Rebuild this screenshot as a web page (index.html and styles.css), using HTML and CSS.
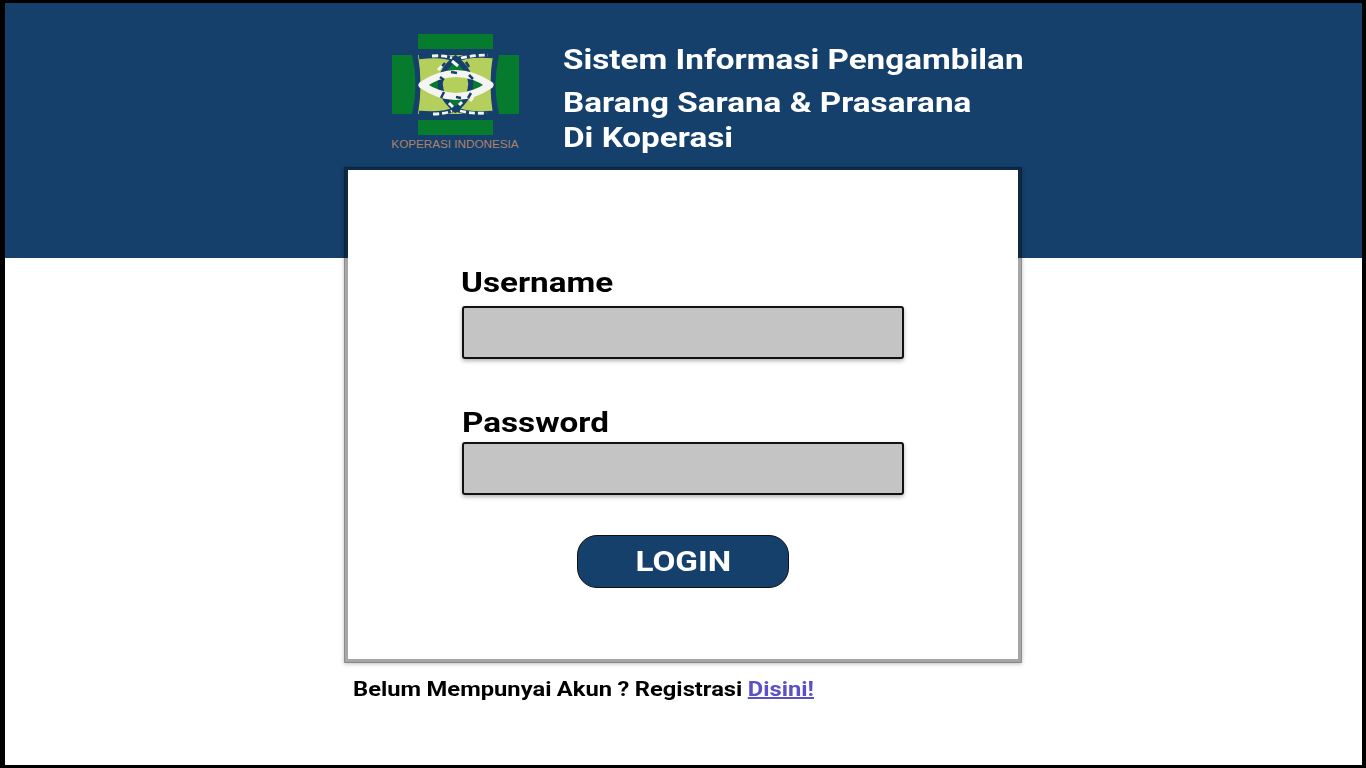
FILE: index.html
```html
<!DOCTYPE html>
<html lang="id">
<head>
<meta charset="utf-8">
<title>Sistem Informasi Pengambilan Barang</title>
<link rel="stylesheet" href="styles.css">
</head>
<body>
<div class="frame">
  <header class="hero">
    <div class="brand">
      <div class="logo">
        <svg class="mark" viewBox="390 33 130 103" aria-hidden="true">
          <rect x="418" y="34" width="75" height="15" fill="#067a2d"/>
          <rect x="418" y="120" width="75" height="15" fill="#067a2d"/>
          <path d="M392 55H412Q419 85 412 114H392Z" fill="#067a2d"/>
          <path d="M519 55H499Q492 85 499 114H519Z" fill="#067a2d"/>
          <path d="M418 55H493Q488 85 493 114H418Q423 85 418 55Z" fill="#b5cf5d"/>
          <path d="M421 85Q456 64 491 85Q456 106 421 85Z" fill="#067a2d"/>
          <path d="M455.500 58Q425 84 455.500 110Q486 84 455.500 58Z" fill="#067a2d"/>
          <rect x="440" y="74" width="31" height="23" rx="7" fill="#b5cf5d"/>
          <path d="M455.500 58Q425 84 455.500 110Q486 84 455.500 58Z" fill="none" stroke="#15406b" stroke-width="5"/>
          <path d="M419 57Q444 54 455.500 60Q468 54 493 56M419 113Q444 115 455.500 109Q468 115 493 113" fill="none" stroke="#15406b" stroke-width="4.500"/>
          <path d="M432 56Q444 55 452 58M461 58Q474 55 488 55M433 114Q444 114 452 111M460 111Q474 114 487 113" fill="none" stroke="#f4f5f2" stroke-width="2.800" stroke-dasharray="6 3"/>
          <path d="M422 85Q456 62 490 85Q456 108 422 85Z" fill="none" stroke="#f4f5f2" stroke-width="7" stroke-linejoin="round"/>
          <path d="M441 68L445 63M469 67L466 62M440 77L444 80M469 75L473 79M441 98L444 92M468 98L471 93M451 72L457 73M456 97L461 98" stroke="#15406b" stroke-width="2.500"/>
          <path d="M452 61L458 66M449 103L453 107M459 105L462 102M438 70L442 66M470 101L473 97" stroke="#f4f5f2" stroke-width="3"/>
        </svg>
        <span class="logo-name">KOPERASI INDONESIA</span>
      </div>
      <h1 class="title">
        <span class="wide title-first">Sistem Informasi Pengambilan</span>
        <span class="wide title-second">Barang Sarana &amp; Prasarana</span>
        <span class="wide title-third">Di Koperasi</span>
      </h1>
    </div>
  </header>
  <main class="content">
    <form class="card">
      <label class="label label-user" for="username"><span class="wide">Username</span></label>
      <input class="field" id="username" type="text">
      <label class="label label-pass" for="password"><span class="wide">Password</span></label>
      <input class="field" id="password" type="password">
      <button class="login" type="button"><span class="wide wide-center">LOGIN</span></button>
    </form>
    <p class="register"><span class="wide wide-small">Belum Mempunyai Akun ? Registrasi <a href="#">Disini!</a></span></p>
  </main>
</div>
</body>
</html>
```
FILE: styles.css
```css
* { box-sizing: border-box; }
html, body { margin: 0; padding: 0; }
body { width: 1366px; height: 768px; overflow: hidden; background: #fff; font-family: Roboto, "Liberation Sans", sans-serif; }
.frame { width: 1366px; height: 768px; border: solid #000; border-width: 3px 4px 3px 5px; display: flex; flex-direction: column; }
.wide { display: inline-block; transform: scaleX(1.187); transform-origin: left center; white-space: nowrap; }
.wide-center { transform-origin: center; }
.wide-small { word-spacing: -.4px; }
.hero { height: 255px; flex: none; background: #15406b; padding: 30px 0 0 385px; }
.brand { display: flex; align-items: flex-start; }
.logo { width: 130px; display: flex; flex-direction: column; align-items: center; }
.mark { width: 130px; height: 103px; display: block; filter: blur(.35px); }
.logo-name { color: #b0826c; font: 11.7px/14px "Liberation Sans", sans-serif; white-space: nowrap; margin-top: 1px; }
.title { margin: 10px 0 0 42.5px; color: #fff; font-weight: 700; font-size: 28px; display: flex; flex-direction: column; align-items: flex-start; white-space: nowrap; }
.title-first { line-height: 34px; }
.title-second { line-height: 34px; margin-top: 9px; }
.title-third { line-height: 34px; margin-top: 1px; }
.content { flex: none; margin-top: -91px; padding-left: 339px; position: relative; }
.card { width: 678px; height: 496px; border: 4px solid rgba(0,0,0,.35); border-top-width: 3px; background: #fff; background-clip: padding-box; box-shadow: 0 1px 4px rgba(0,0,0,.25); padding: 0 0 0 114px; display: flex; flex-direction: column; align-items: flex-start; }
.label { color: #000; font-weight: 700; font-size: 28px; line-height: 34px; }
.label-user { margin-top: 96px; margin-bottom: 6px; margin-left: -1px; }
.label-pass { margin-top: 47px; margin-bottom: 2px; }
.field { display: block; width: 442px; height: 53px; background: #c4c4c4; border: 2px solid #111; border-radius: 3px; box-shadow: 0 2px 4px rgba(0,0,0,.3); padding: 0; }
.login { margin: 40px 0 0 115px; width: 212px; height: 53px; border: 1px solid #111; border-radius: 20px; background: #15406b; color: #fff; font: 700 28px/1 Roboto, sans-serif; padding: 0; }
.register { margin: 14px 0 0 9px; font-weight: 700; font-size: 20px; line-height: 24px; color: #000; white-space: nowrap; }
.register a { color: #5a50c8; }
```
